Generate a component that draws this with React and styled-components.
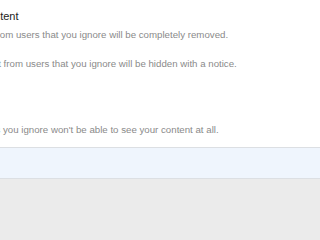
import React from 'react';
import styled, { createGlobalStyle } from 'styled-components';

const GlobalStyle = createGlobalStyle`
  html, body {
    margin: 0;
    padding: 0;
    background: #ebebeb;
    font-family: "Liberation Sans", Arial, sans-serif;
  }
`;

const Viewport = styled.div`
  overflow: hidden;
`;

const Panel = styled.div`
  background: #fff;
  margin-left: -33px;
`;

const Section = styled.section`
  display: flex;
  flex-direction: column;
  padding: 8px 0 10px;
`;

const Heading = styled.h3`
  margin: 0 0 4px;
  padding-left: 13px;
  font-size: 11px;
  line-height: 16px;
  font-weight: 400;
  color: #222;
`;

const Description = styled.p`
  margin: 0;
  margin-bottom: ${({ $gap }) => $gap || 0}px;
  padding-left: ${({ $indent }) => $indent || 0}px;
  font-size: 9.7px;
  line-height: 14px;
  color: #8a8a8a;
  white-space: nowrap;
`;

const Footer = styled.div`
  height: 30px;
  background: #eff5fd;
  border-top: 1px solid #dcdfe3;
  border-bottom: 1px solid #dcdfe3;
`;

export default function App() {
  return (
    <>
      <GlobalStyle />
      <Viewport>
        <Panel>
          <Section>
            <Heading>Content</Heading>
            <Description $gap={15}>
              Posts from users that you ignore will be completely removed.
            </Description>
            <Description $gap={52}>
              Content from users that you ignore will be hidden with a notice.
            </Description>
            <Description $indent={8}>
              Users you ignore won't be able to see your content at all.
            </Description>
          </Section>
          <Footer />
        </Panel>
      </Viewport>
    </>
  );
}
